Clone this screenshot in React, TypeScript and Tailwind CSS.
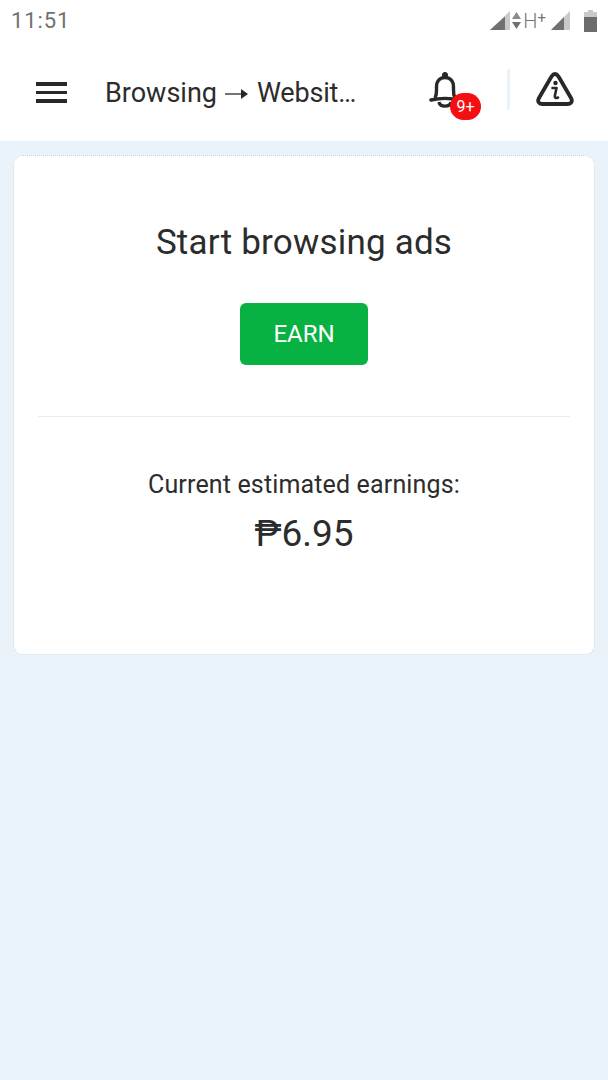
export default function App() {
  return (
    <div className="w-[608px] h-[1080px] bg-[#ebf3fa] flex flex-col font-['Roboto',sans-serif] text-[#2c2c2c] overflow-hidden">
      <div className="h-[141px] bg-white flex flex-col shrink-0">
        <div className="h-[44px] flex items-center justify-between pl-[11px] pr-[11px] pb-[2px] shrink-0">
          <span className="text-[22px] leading-none tracking-[0.9px] text-[#707070]">11:51</span>
          <div className="flex items-center text-[#757575]">
            <svg width="20" height="22" viewBox="0 0 20 22">
              <path d="M20 1 V20 H0 Z" fill="#c9c9c9" />
              <path d="M15 6.500 V20 H0 Z" fill="#707070" />
            </svg>
            <svg width="9" height="18" viewBox="0 0 9 18" className="ml-[2px]">
              <path d="M4.500 0 L9 7 H0 Z" fill="#8a8a8a" />
              <path d="M4.500 17 L9 10 H0 Z" fill="#707070" />
            </svg>
            <span className="text-[20px] leading-none ml-[2px] font-light">H</span>
            <span className="text-[15px] leading-none mb-[6px]">+</span>
            <svg width="20" height="22" viewBox="0 0 20 22" className="ml-[5px]">
              <path d="M19 1 V20 H0 Z" fill="#c9c9c9" />
              <path d="M13 7 V20 H0 Z" fill="#707070" />
            </svg>
            <svg width="13" height="22" viewBox="0 0 13 22" className="ml-[13px]">
              <path d="M4 0 H9 V2 H13 V22 H0 V2 H4 Z" fill="#c9c9c9" />
              <path d="M0 7 H13 V22 H0 Z" fill="#6c6c6c" />
            </svg>
          </div>
        </div>
        <div className="flex-1 flex items-center relative">
          <div className="ml-[36px] w-[31px] flex flex-col gap-[5px]">
            <div className="h-[3.500px] bg-[#282828]" />
            <div className="h-[3.500px] bg-[#282828]" />
            <div className="h-[3.500px] bg-[#282828]" />
          </div>
          <div className="ml-[38px] w-[253px] text-[27px] leading-[34px] flex items-center text-[#2c2c2c] whitespace-nowrap">
            <span>Browsing</span>
            <svg width="24" height="14" viewBox="0 0 24 14" className="ml-[8px] mr-[8px] mt-[3px] shrink-0">
              <path d="M0 7 H18" stroke="#282828" strokeWidth="1.300" />
              <path d="M16 2 L23 7 L16 12 Z" fill="#282828" />
            </svg>
            <span className="tracking-[-0.2px]">Websit…</span>
          </div>
          <div className="relative ml-[71px] -mt-[2px] w-[34px] h-[42px]">
            <svg width="34" height="42" viewBox="0 0 34 42" fill="none" stroke="#282828" strokeWidth="3.400">
              <circle cx="16" cy="4" r="2.600" fill="#282828" strokeWidth="1" />
              <path d="M6 27 C8 23 7.500 20 7.500 16 C7.500 10 11 6.500 16 6.500 C21 6.500 24.500 10 24.500 16 C24.500 20 24 23 26 27" strokeLinejoin="round" />
              <path d="M2 29 C10 27 22 27 30 29" strokeLinecap="round" />
              <path d="M10 31 C11 36.500 21 36.500 22 31" />
            </svg>
            <div className="absolute left-[21px] top-[22px] w-[31px] h-[27px] rounded-full bg-[#f50f12] text-white text-[16px] leading-[27px] text-center">
              9+
            </div>
          </div>
          <div className="absolute left-[507px] top-[25px] w-[3px] h-[41px] bg-[#ebf3fa]" />
          <svg width="38" height="34" viewBox="0 0 38 34" fill="none" stroke="#282828" className="absolute left-[535.500px] top-[28px]">
            <path d="M19 2 C20.500 2 21.500 3 22.500 4.500 L35 26 C37 29.500 35 32 32 32 H6 C3 32 1 29.500 3 26 L15.500 4.500 C16.500 3 17.500 2 19 2 Z" strokeWidth="3.800" strokeLinejoin="round" />
            <circle cx="19.500" cy="11" r="2.200" fill="#282828" stroke="none" />
            <path d="M16.500 16 H20.500 L18.800 24 C18.600 26 20 26.500 22 25.500" strokeWidth="2.600" strokeLinecap="round" strokeLinejoin="round" />
          </svg>
        </div>
      </div>
      <div className="mx-[13px] mt-[14px] h-[500px] bg-white rounded-[10px] border border-dotted border-[#c5d2e0] flex flex-col items-center shrink-0">
        <div className="mt-[65px] text-[35px] leading-[44px] tracking-[0.2px] text-[#2c2c2c]">Start browsing ads</div>
        <button className="mt-[38px] w-[128px] h-[62px] rounded-[6px] bg-[#07b243] text-white text-[24px]">EARN</button>
        <div className="mt-[51px] w-[532px] h-[1px] bg-[#ebebeb]" />
        <div className="mt-[52px] text-[25px] leading-[32px] tracking-[0.15px] text-[#2c2c2c]">Current estimated earnings:</div>
        <div className="mt-[11px] text-[37px] leading-[44px] text-[#2c2c2c]">₱6.95</div>
      </div>
    </div>
  );
}
